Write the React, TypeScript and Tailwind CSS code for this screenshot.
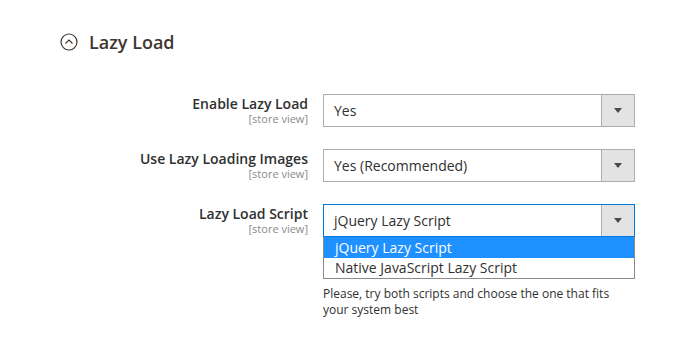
import { ReactNode } from "react";

const fieldFont = { fontFamily: '"Open Sans", "Liberation Sans", sans-serif' };

const Arrow = () => (
  <svg width="8" height="5" viewBox="0 0 8 5" className="block">
    <path d="M0 0h8L4 5z" fill="#514943" />
  </svg>
);

const SelectBox = ({ value, focused = false }: { value: string; focused?: boolean }) => (
  <div
    className={
      "flex h-[33px] w-[312px] border bg-white " +
      (focused ? "border-[#007bdb]" : "border-[#adadad]")
    }
  >
    <div className="flex flex-1 items-center pl-[10px] text-[14px] text-[#303030]">{value}</div>
    <div className="flex w-[33px] items-center justify-center border-l border-[#adadad] bg-[#e3e3e3]">
      <Arrow />
    </div>
  </div>
);

const Row = ({ label, children }: { label: string; children: ReactNode }) => (
  <div className="flex">
    <div className="w-[308px] pt-px text-right">
      <div className="text-[14px] font-semibold leading-[17px] text-[#303030]">{label}</div>
      <div className="text-[11px] leading-[14px] text-[#8a8a8a]">[store view]</div>
    </div>
    <div className="ml-[15px]">{children}</div>
  </div>
);

export default function App() {
  return (
    <div className="min-h-[354px] w-[685px] bg-white" style={fieldFont}>
      <div className="flex items-center pl-[60px] pt-[32px]">
        <svg width="18" height="18" viewBox="0 0 18 18" className="block">
          <circle cx="9" cy="9" r="8" fill="none" stroke="#41362f" strokeWidth="1.2" />
          <path d="M5.5 10.5L9 7l3.5 3.5" fill="none" stroke="#41362f" strokeWidth="1.2" />
        </svg>
        <h2 className="ml-[11px] text-[18px] font-semibold leading-[20px] text-[#41362f]">Lazy Load</h2>
      </div>

      <div className="mt-[42px] flex flex-col gap-[22px]">
        <Row label="Enable Lazy Load">
          <SelectBox value="Yes" />
        </Row>
        <Row label="Use Lazy Loading Images">
          <SelectBox value="Yes (Recommended)" />
        </Row>
        <Row label="Lazy Load Script">
          <div className="relative">
            <SelectBox value="jQuery Lazy Script" focused />
            <div className="absolute left-0 top-[33px] w-[312px] border border-t-0 border-[#8a8a8a] bg-white text-[14px] text-[#303030]">
              <div className="h-[21px] bg-[#1e90ff] pl-[11px] leading-[21px] text-white">jQuery Lazy Script</div>
              <div className="h-[20px] pl-[11px] leading-[20px]">Native JavaScript Lazy Script</div>
            </div>
            <p className="mt-[49px] w-[300px] text-[12px] leading-[16px] text-[#303030]">
              Please, try both scripts and choose the one that fits your system best
            </p>
          </div>
        </Row>
      </div>
    </div>
  );
}
